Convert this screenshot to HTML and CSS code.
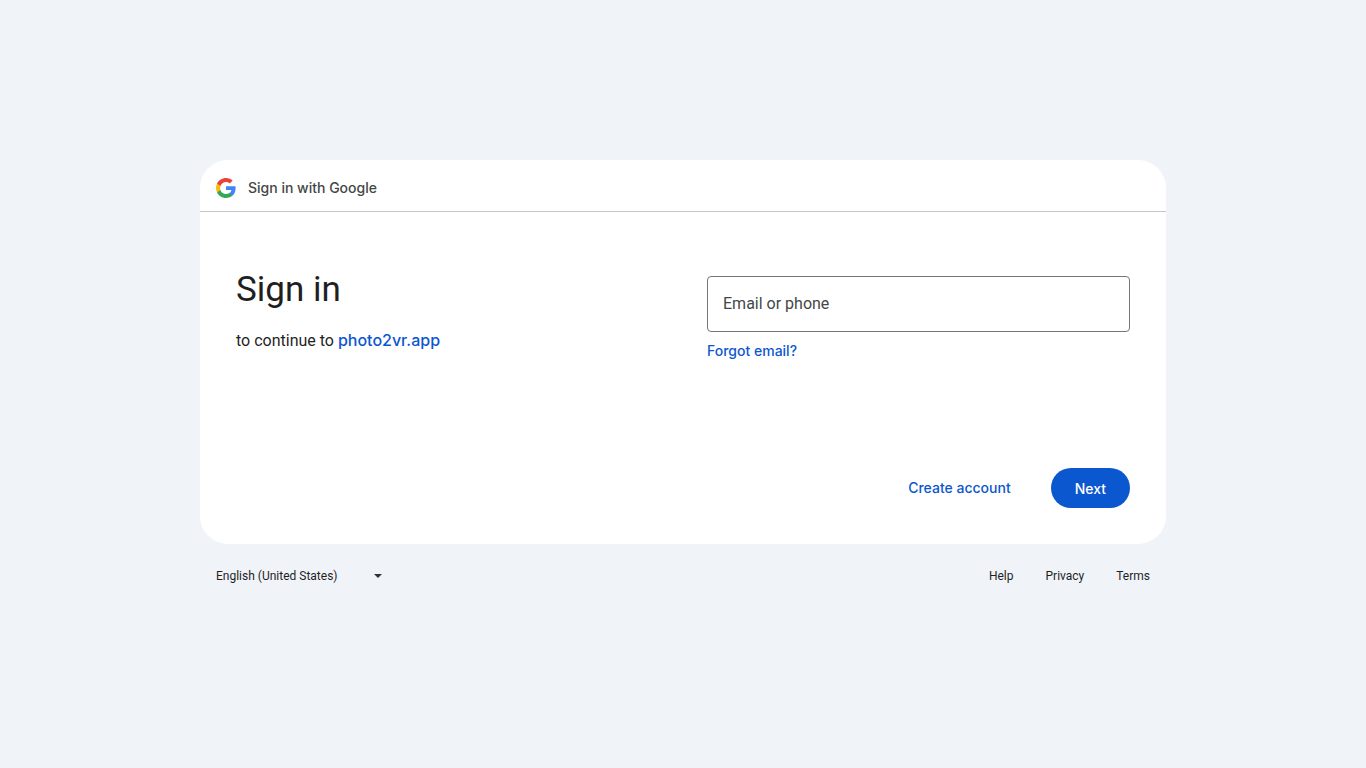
FILE: index.html
```html
<!DOCTYPE html>
<html lang="en">
<head>
<meta charset="utf-8">
<meta name="viewport" content="width=device-width, initial-scale=1">
<title>Sign in - Google Accounts</title>
<link rel="stylesheet" href="styles.css">
</head>
<body>
<div class="page">
  <main class="card">
    <header class="card-header">
      <svg class="logo" viewBox="2 2 44 44" aria-hidden="true">
        <path fill="#4285f4" d="M45.12 24.5c0-1.56-.14-3.06-.4-4.5H24v8.51h11.84c-.51 2.75-2.06 5.08-4.39 6.64v5.52h7.11c4.16-3.83 6.56-9.47 6.56-16.17z"/>
        <path fill="#34a853" d="M24 46c5.94 0 10.92-1.97 14.56-5.33l-7.11-5.52c-1.97 1.32-4.49 2.1-7.45 2.1-5.73 0-10.58-3.87-12.31-9.07H4.34v5.7C7.96 41.07 15.4 46 24 46z"/>
        <path fill="#fbbc05" d="M11.69 28.18C11.25 26.86 11 25.45 11 24s.25-2.86.69-4.18v-5.7H4.34C2.85 17.09 2 20.45 2 24s.85 6.91 2.34 9.88l7.35-5.7z"/>
        <path fill="#ea4335" d="M24 10.75c3.23 0 6.13 1.11 8.41 3.29l6.31-6.31C34.91 4.18 29.93 2 24 2 15.4 2 7.96 6.93 4.34 14.12l7.35 5.7c1.73-5.2 6.58-9.07 12.31-9.07z"/>
      </svg>
      <span>Sign in with Google</span>
    </header>
    <div class="content">
      <section class="intro">
        <h1>Sign in</h1>
        <p>to continue to <button type="button" class="link app">photo2vr.app</button></p>
      </section>
      <form class="form">
        <input class="field" type="text" placeholder="Email or phone" aria-label="Email or phone">
        <button type="button" class="link forgot">Forgot email?</button>
      </form>
    </div>
    <div class="actions">
      <button type="button" class="link create">Create account</button>
      <button type="button" class="next">Next</button>
    </div>
  </main>
  <footer class="footer">
    <div class="language">
      <select aria-label="Language"><option>English (United States)</option></select>
      <svg class="arrow" viewBox="0 0 8 4" aria-hidden="true"><path fill="#303134" d="M0 0h8L4 4z"/></svg>
    </div>
    <nav class="links">
      <a href="#">Help</a>
      <a href="#">Privacy</a>
      <a href="#">Terms</a>
    </nav>
  </footer>
</div>
</body>
</html>
```
FILE: styles.css
```css
* {
  box-sizing: border-box;
}

body {
  margin: 0;
  min-height: 100vh;
  display: flex;
  align-items: center;
  background: #f0f4f9;
  color: #1f1f1f;
  font-family: Roboto, sans-serif;
}

button,
input,
select {
  font-family: inherit;
}

.page {
  flex: 1;
  max-width: 1040px;
  margin: 0 200px;
}

.card {
  min-height: 384px;
  display: flex;
  flex-direction: column;
  background: #fff;
  border-radius: 28px;
}

.card-header {
  display: flex;
  align-items: center;
  gap: 12px;
  padding: 16px 16px 11px;
  border-bottom: 1px solid #c4c7c5;
  color: #444746;
  font-family: Inter, Roboto, sans-serif;
  font-size: 14px;
  font-weight: 500;
  line-height: 24px;
}

.logo {
  width: 20px;
  height: 20px;
}

.content {
  flex: 1;
  display: grid;
  grid-template-columns: 1fr 1fr;
  gap: 48px;
  padding: 56px 36px 0;
}

h1 {
  margin: 0 0 16px;
  font-size: 35px;
  font-weight: 400;
  line-height: 44px;
}

p {
  margin: 0;
  font-size: 16px;
  line-height: 24px;
}

.link {
  padding: 0;
  border: 0;
  background: none;
  color: #0b57d0;
  font-family: Inter, Roboto, sans-serif;
  font-size: 14px;
  font-weight: 500;
  line-height: 20px;
  cursor: pointer;
}

.link.app {
  font-size: 16px;
  line-height: 24px;
}

.form {
  display: flex;
  flex-direction: column;
  align-items: flex-start;
  gap: 9px;
  padding-top: 8px;
}

.field {
  width: 100%;
  height: 56px;
  padding: 0 15px 2px;
  border: 1px solid #747775;
  border-radius: 4px;
  background: #fff;
  color: #1f1f1f;
  font-size: 16px;
}

.field::placeholder {
  color: #444746;
  opacity: 1;
}

.actions {
  display: flex;
  justify-content: flex-end;
  align-items: center;
  gap: 40px;
  padding: 0 36px 36px;
}

.next {
  height: 40px;
  padding: 0 24px;
  border: 0;
  border-radius: 20px;
  background: #0b57d0;
  color: #fff;
  font-family: Inter, Roboto, sans-serif;
  font-size: 14px;
  font-weight: 500;
  cursor: pointer;
}

.footer {
  display: flex;
  justify-content: space-between;
  align-items: center;
  height: 64px;
  padding: 0 16px;
  font-size: 12px;
}

.language {
  display: grid;
  align-items: center;
  width: 166px;
}

.language select {
  grid-area: 1 / 1;
  width: 100%;
  padding: 0;
  border: 0;
  appearance: none;
  background: none;
  color: #1f1f1f;
  font-size: 12px;
  line-height: 16px;
}

.arrow {
  grid-area: 1 / 1;
  justify-self: end;
  width: 8px;
  height: 4px;
  pointer-events: none;
}

.links {
  display: flex;
  gap: 32px;
}

.links a {
  color: inherit;
  text-decoration: none;
}
```
